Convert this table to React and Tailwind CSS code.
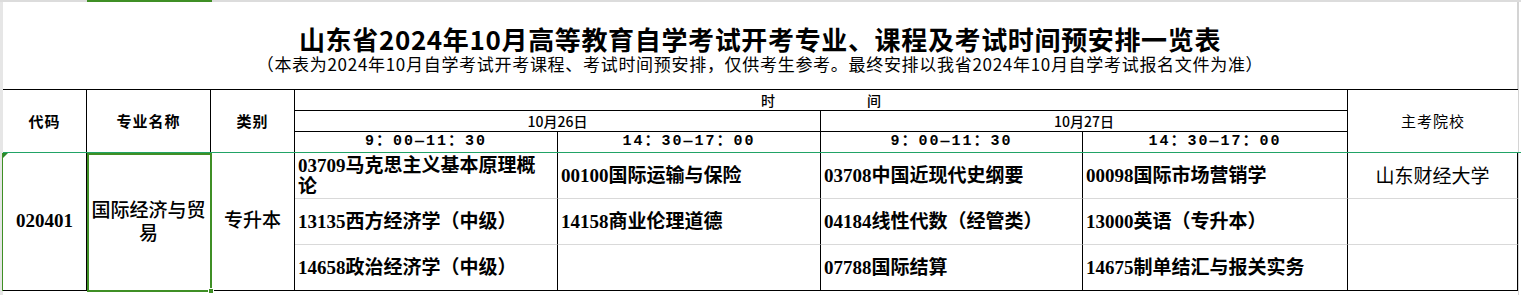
import React from "react";

const courses = [
    ["03709马克思主义基本原理概\n论", "00100国际运输与保险", "03708中国近现代史纲要", "00098国际市场营销学"],
    ["13135西方经济学（中级）", "14158商业伦理道德", "04184线性代数（经管类）", "13000英语（专升本）"],
    ["14658政治经济学（中级）", "", "07788国际结算", "14675制单结汇与报关实务"],
];

const times = ["9：00—11：30", "14：30—17：00", "9：00—11：30", "14：30—17：00"];

const sans = "font-['Noto_Sans_CJK_SC',sans-serif]";
const serif = "font-['Liberation_Serif','Noto_Sans_CJK_SC',serif]";
const mono = "font-['Liberation_Mono','Noto_Sans_CJK_SC',monospace]";

function App() {
    return (
        <div className="relative w-[1521px] h-[295px] overflow-hidden bg-white text-black">
            {/* column header strip */}
            <div className="flex h-[2px]">
                <div className="w-[87px] bg-[#dcdcdc]" />
                <div className="w-[125px] bg-[#3f8f25]" />
                <div className="flex-1 bg-[#dcdcdc]" />
            </div>

            <div className="flex h-[293px]">
                {/* row header strip */}
                <div className="flex flex-col w-[3px]">
                    <div className="h-[151px] bg-[#e6e6e6]" />
                    <div className="flex h-[138px]">
                        <div className="w-[2px] bg-[#e6e6e6]" />
                        <div className="w-[1px] bg-[#3f8f25]" />
                    </div>
                    <div className="flex-1 bg-[#e6e6e6]" />
                </div>

                <div className="w-[1515px]">
                    {/* title */}
                    <div className="flex flex-col items-center pt-[23px] h-[87px] border-r border-[#d4d4d4]">
                        <h1 className={`${sans} font-bold text-[26px] leading-[28px] tracking-[0.65px]`}>
                            山东省2024年10月高等教育自学考试开考专业、课程及考试时间预安排一览表
                        </h1>
                        <p className={`${sans} mt-[1px] text-[17px] leading-[20px] tracking-[0.7px]`}>
                            （本表为2024年10月自学考试开考课程、考试时间预安排，仅供考生参考。最终安排以我省2024年10月自学考试报名文件为准）
                        </p>
                    </div>

                    {/* table */}
                    <div className="grid grid-cols-[84px_124px_84px_263px_263px_262px_265px_170px] grid-rows-[21px_21px_21px_46px_46px_46px] border-t border-black">
                        <div className={`${sans} row-span-3 flex justify-center items-center border-r border-b border-black font-bold text-[15px] tracking-[1px]`}>代码</div>
                        <div className={`${sans} row-span-3 flex justify-center items-center border-r border-b border-black font-bold text-[15px] tracking-[1px]`}>专业名称</div>
                        <div className={`${sans} row-span-3 flex justify-center items-center border-r border-b border-black font-bold text-[15px] tracking-[1px]`}>类别</div>
                        <div className={`${sans} col-span-4 flex justify-center items-center gap-[92px] border-r border-b border-black font-medium text-[14px]`}>
                            <span>时</span>
                            <span>间</span>
                        </div>
                        <div className={`${sans} row-span-3 flex justify-center items-center border-b border-black text-[15px] tracking-[1px]`}>主考院校</div>

                        <div className={`${sans} col-span-2 flex justify-center items-center border-r border-b border-black font-medium text-[14px]`}>10月26日</div>
                        <div className={`${sans} col-span-2 flex justify-center items-center border-r border-b border-black font-medium text-[14px]`}>10月27日</div>

                        {times.map((t, i) => (
                            <div key={i} className={`${mono} flex justify-center items-center border-r border-b border-black font-bold text-[15px] tracking-[2px]`}>
                                {t}
                            </div>
                        ))}

                        <div className={`${serif} relative row-span-3 flex justify-center items-center border-r border-b border-black font-bold text-[19px]`}>
                            <div className="top-0 left-0 absolute border-t-[5px] border-t-[#2c8a2c] border-r-[5px] border-r-transparent w-0 h-0" />
                            020401
                        </div>
                        <div className={`${serif} relative row-span-3 flex justify-center items-center px-[2px] border-r border-b border-black font-medium text-[19px] text-center leading-[23px]`}>
                            国际经济与贸易
                            {/* selected cell */}
                            <div className="top-0 right-[-2px] bottom-[-2px] left-0 absolute border-2 border-[#3f8f25]">
                                <div className="right-[-4px] bottom-[-4px] absolute bg-[#3f8f25] border border-white w-[6px] h-[6px]" />
                            </div>
                        </div>
                        <div className={`${serif} row-span-3 flex justify-center items-center border-r border-b border-black font-medium text-[19px]`}>专升本</div>

                        {courses.map((row, r) => (
                            <React.Fragment key={r}>
                                {row.map((c, i) => (
                                    <div
                                        key={i}
                                        className={`${serif} flex items-center pl-[3px] border-r border-black border-b font-semibold text-[19px] leading-[21px] whitespace-pre-line ${r < 2 ? "border-b-[#d9d9d9]" : "border-b-black"}`}
                                    >
                                        {c}
                                    </div>
                                ))}
                                <div className={`${sans} flex justify-center items-center border-b border-r border-r-black text-[19px] ${r < 2 ? "border-b-[#d9d9d9]" : "border-b-black"}`}>
                                    {r === 0 ? "山东财经大学" : ""}
                                </div>
                            </React.Fragment>
                        ))}
                    </div>
                </div>

                {/* sheet beyond the table */}
                <div className="flex-1 border-l border-[#d4d4d4]" />
            </div>

            {/* frozen pane line */}
            <div className="top-[152px] right-0 left-[3px] absolute bg-[#21a366] h-px" />
        </div>
    );
}

export default App;
